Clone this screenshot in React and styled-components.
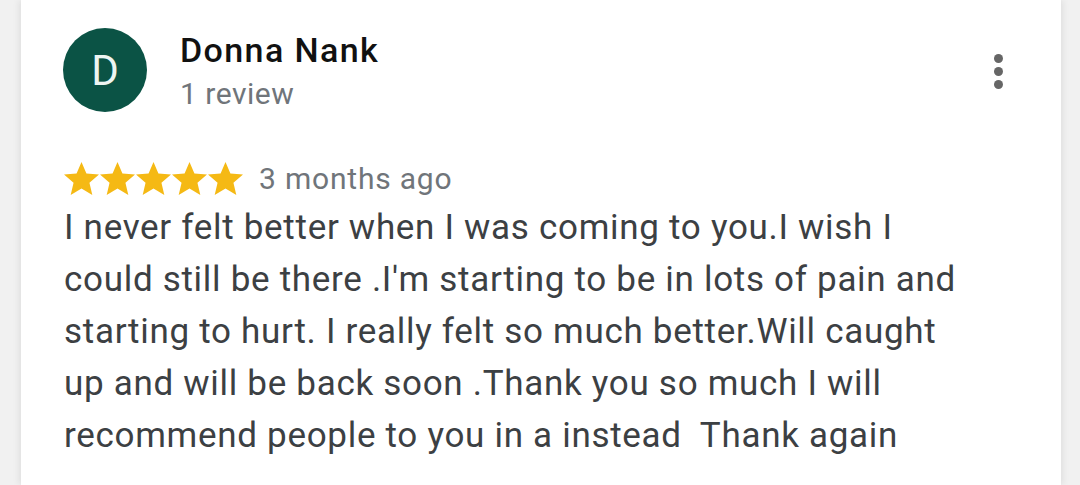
import React from "react";
import styled, { createGlobalStyle } from "styled-components";

const Global = createGlobalStyle`
  html, body { margin: 0; padding: 0; }
  body {
    background: #f1f1f1;
    font-family: Roboto, "Noto Sans", Arial, sans-serif;
    width: 1080px;
    height: 485px;
    overflow: hidden;
  }
`;

const Page = styled.div`
  padding: 0 19px 0 21px;
  height: 485px;
  box-sizing: border-box;
`;

const Card = styled.div`
  background: #fff;
  height: 100%;
  box-sizing: border-box;
  padding: 28px 58px 0 43px;
  box-shadow: -3px 0 6px rgba(0,0,0,0.06), 3px 0 6px rgba(0,0,0,0.06);
  display: flex;
  flex-direction: column;
`;

const Header = styled.div`
  display: flex;
  align-items: flex-start;
`;

const Avatar = styled.div`
  width: 84px;
  height: 84px;
  border-radius: 50%;
  background: #0b5345;
  color: #eef5f2;
  display: flex;
  align-items: center;
  justify-content: center;
  font-size: 42px;
  font-weight: 400;
  flex-shrink: 0;
  margin-left: -1px;
`;

const Who = styled.div`
  margin-left: 33px;
  margin-top: 2px;
  display: flex;
  flex-direction: column;
  gap: 4px;
`;

const Name = styled.div`
  font-size: 34px;
  line-height: 40px;
  font-weight: 500;
  letter-spacing: 1.4px;
  color: #111;
`;

const Sub = styled.div`
  font-size: 30px;
  line-height: 40px;
  letter-spacing: 0.5px;
  color: #70757a;
`;

const Menu = styled.div`
  margin-left: auto;
  margin-top: 26px;
  display: flex;
  flex-direction: column;
  gap: 4px;
`;

const Dot = styled.span`
  width: 9px;
  height: 9px;
  border-radius: 50%;
  background: #666;
`;

const RatingRow = styled.div`
  display: flex;
  align-items: center;
  margin-top: 46px;
  height: 36px;
`;

const Stars = styled.div`
  display: flex;
  gap: 1px;
`;

const Time = styled.span`
  margin-left: 16px;
  font-size: 30px;
  color: #70757a;
  letter-spacing: 0.8px;
  line-height: 36px;
  position: relative;
  top: 1px;
`;

const Body = styled.p`
  margin: 6px 0 0;
  max-width: 910px;
  font-size: 35px;
  line-height: 52px;
  letter-spacing: 0.7px;
  color: #3c4043;
  white-space: pre-wrap;
`;

const Star = () => (
  <svg width="35" height="33" viewBox="2 2 20 19" preserveAspectRatio="none">
    <path
      fill="#f5b914"
      d="M12 17.27L18.18 21l-1.64-7.03L22 9.24l-7.19-.61L12 2 9.19 8.63 2 9.24l5.46 4.73L5.82 21z"
    />
  </svg>
);

export default function App() {
  return (
    <>
      <Global />
      <Page>
        <Card>
          <Header>
            <Avatar>D</Avatar>
            <Who>
              <Name>Donna Nank</Name>
              <Sub>1 review</Sub>
            </Who>
            <Menu>
              <Dot />
              <Dot />
              <Dot />
            </Menu>
          </Header>
          <RatingRow>
            <Stars>
              {[0, 1, 2, 3, 4].map((i) => (
                <Star key={i} />
              ))}
            </Stars>
            <Time>3 months ago</Time>
          </RatingRow>
          <Body>
            {"I never felt better when I was coming to you.I wish I could still be there .I'm starting to be in lots of pain and starting to hurt. I really felt so much better.Will caught up and will be back soon .Thank you so much I will recommend people to you in a instead  Thank again"}
          </Body>
        </Card>
      </Page>
    </>
  );
}
